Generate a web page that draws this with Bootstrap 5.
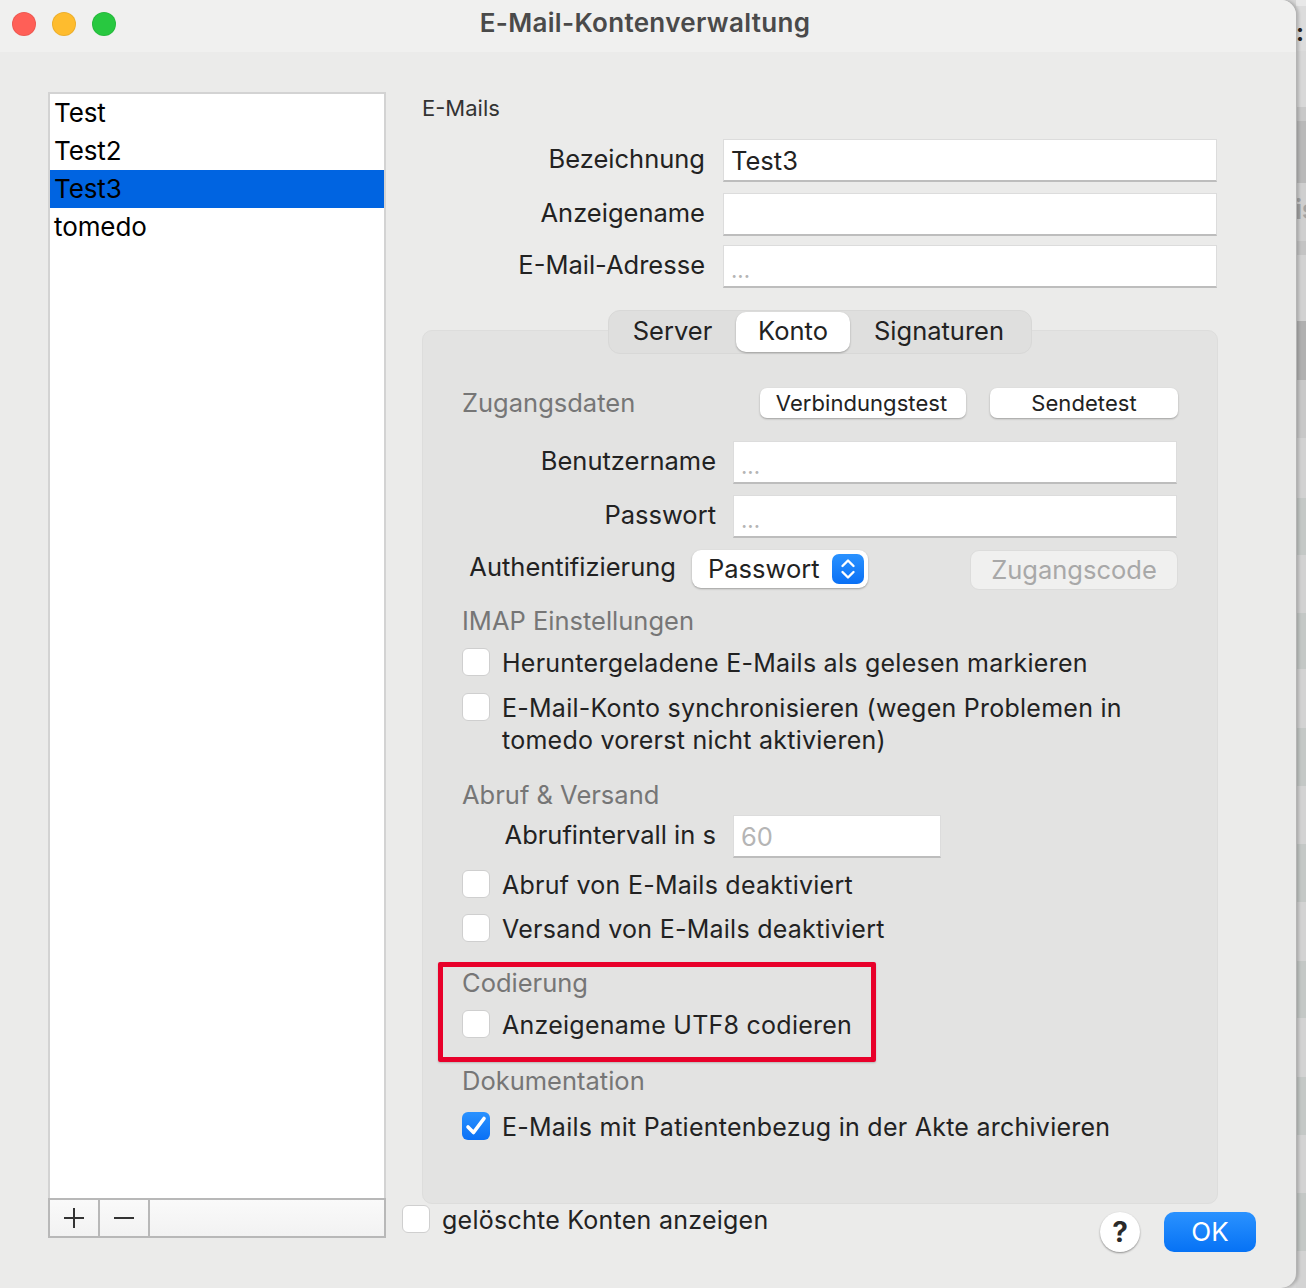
<!DOCTYPE html>
<html lang="de"><head><meta charset="utf-8"><title>E-Mail-Kontenverwaltung</title>
<link href="https://cdn.jsdelivr.net/npm/bootstrap@5.3.0/dist/css/bootstrap.min.css" rel="stylesheet">
<style>
html,body{margin:0;height:1288px;overflow:hidden}
body{background:#d6d6d6;font-family:Inter,"Liberation Sans",sans-serif;color:#222;font-size:25.5px;line-height:32px;letter-spacing:0}
.stage{height:1288px;width:1306px}
.backdrop{position:relative;width:10px;height:1288px;overflow:hidden;background:linear-gradient(#e8e8e8 0 6px,#dcdcdc 6px 51px,#d8d8d8 51px 107px,#c8c8c8 107px 121px,#b9b9b9 121px 183px,#cfcfcf 183px 241px,#c4c4c4 241px 255px,#d2d2d2 255px 321px,#b0b0b0 321px 380px,#c8c8c8 380px 438px,#d2d2d2 438px 498px,#c4c8c6 498px 555px,#d2d2d2 555px 613px,#c4c8c6 613px 669px,#d3d3d3 669px 728px,#c4c8c6 728px 786px,#d3d3d3 786px 844px,#c4c8c6 844px 902px,#d3d3d3 902px 961px,#c4c8c6 961px 1018px,#d3d3d3 1018px 1077px,#c4c8c6 1077px 1135px,#d3d3d3 1135px 1193px,#c4c8c6 1193px 1251px,#d3d3d3 1251px 1288px)}
.bgtxt1{position:absolute;left:0;top:17px;font-weight:700;font-size:24px;color:#222}
.bgtxt2{position:absolute;left:-1px;top:194px;font-weight:700;font-size:26px;color:#a3a3a3}
.winbox{position:relative;z-index:1;width:1296px;height:1288px;background:#ebebea;border-radius:0 15px 15px 0;box-shadow:1px 0 0 #b4b4b4,3px 0 3px rgba(0,0,0,.18);overflow:hidden;flex:none}
.titlebar{height:52px;background:#f0f0ef}
.dots{width:128px;gap:16px;padding:12px 0 0 12px;flex:none}
.dotspacer{width:134px;flex:none}
.dot{width:24px;height:24px;border-radius:50%;border:1px solid rgba(0,0,0,.07)}
.dot-r{background:#ff5f57}.dot-y{background:#febc2e}.dot-g{background:#28c840}
.titletext{font-weight:600;font-size:26px;color:#4a4a4a;line-height:46px;letter-spacing:.33px}
.sidecol{width:338px;height:1146px;margin:40px 0 0 48px;border:2px solid #d3d3d3;border-bottom:0;background:#fff}
.acct{height:38px;line-height:38px;padding-left:4px;color:#000;font-size:26px;letter-spacing:-.1px}
.acct-on{background:#0064e1}
.sidefoot{height:40px;margin:0 -2px;border:2px solid #b8b8b8;background:linear-gradient(#fafafa,#f2f2f2)}
.footbtn{width:50px;border-right:2px solid #b8b8b8;height:100%}
.maincol{width:796px;margin-left:36px;padding-top:40px}
.sect-top{font-size:22px;line-height:32px;color:#333}
.flabel{width:301px;flex:none;text-align:right;padding:0 18px 3px 0}
.finput{height:43px;margin-right:1px;background:#fff;border:1px solid #dcdcdc;border-bottom:2px solid #bdbdbd;padding:0 7px;line-height:42px;overflow:hidden}
.ph{color:#b5b5b5;font-size:22px;line-height:48px}
.m15{margin-top:15px}.m12{margin-top:12px}.m11{margin-top:11px}.m10{margin-top:10px}.m9{margin-top:9px}.m22{margin-top:22px}.m13{margin-top:13px}.m14{margin-top:14px}.m23{margin-top:23px}.m24{margin-top:24px}.m4{margin-top:4px}.m42{margin-top:42px}.m56{margin-top:56px}
.panel{height:874px;background:#e3e3e2;border:1px solid #dddddc;border-radius:10px;position:relative;padding:0 39px 0 39px}
.tabs{position:absolute;left:185px;top:-21px;width:424px;height:44px;background:#dfdfde;border:1px solid #d8d8d7;border-radius:12px;padding:1px 0 0 0}
.tabbtn{height:40px;line-height:38px;text-align:center;color:#222}
.tw1{width:127px}.tw2{width:114px}.tw3{width:178px}
.tabon{background:#fff;border-radius:10px;box-shadow:0 1px 2px rgba(0,0,0,.3)}
.grp{color:#767676;line-height:32px}
.zugtitle{width:298px}
.macbtn{background:#fff;border-radius:7px;box-shadow:0 1px 2px rgba(0,0,0,.3);font-size:22px;line-height:31px;height:30px;text-align:center;color:#222;letter-spacing:.06px}
.bw1{width:206px;padding-right:3px}.bw2{width:188px}
.lbl2{width:271px;flex:none;text-align:right;padding:0 17px 3px 0}
.lbl3{width:230px;flex:none;text-align:right;padding-right:16px;line-height:34px}
.macsel{width:176px;height:38px;background:#fff;border-radius:9px;box-shadow:0 1px 2px rgba(0,0,0,.3);padding:0 4px 0 16px;line-height:38px;flex:none}
.updown{width:32px;height:30px;border-radius:7px;background:linear-gradient(#2a92ff,#0a70f5)}
.zbtn{width:208px;height:40px;background:#f0f0ef;border:1px solid #dcdcdb;border-radius:9px;text-align:center;line-height:37px;color:#a8a8a8}
.intervall{width:208px;color:#b5b5b5;flex:none}
.cbox{width:28px;height:28px;margin-top:1px;flex:none;background:#fff;border:1px solid #cfcfcf;border-radius:6px}
.cbox-on{background:linear-gradient(#2a92ff,#0a70f5);border:0}
.ckrow{gap:12px;font-size:25px;letter-spacing:.25px}
.redbox{position:absolute;left:15px;top:631px;width:438px;height:100px;border:5px solid #e8002a;border-radius:2px;box-shadow:0 1px 2px rgba(0,0,0,.2)}
.bottomrow{margin:0 -38px 0 -20px}
.helpbtn{width:40px;height:40px;margin-top:8px;border-radius:50%;background:#fff;box-shadow:0 1px 2px rgba(0,0,0,.4);font-weight:700;font-size:28px;line-height:40px;text-align:center;color:#2a2a2a}
.okbtn{width:92px;height:40px;margin:8px 0 0 24px;border-radius:10px;background:linear-gradient(#2a92ff,#0672f5);color:#fff;font-size:26px;line-height:40px;text-align:center}
</style></head><body>
<div class="stage d-flex">
 <div class="winbox">
  <div class="titlebar d-flex align-items-start">
   <div class="dots d-flex"><span class="dot dot-r"></span><span class="dot dot-y"></span><span class="dot dot-g"></span></div>
   <div class="titletext flex-grow-1 text-center">E-Mail-Kontenverwaltung</div>
   <div class="dotspacer"></div>
  </div>
  <div class="d-flex">
   <div class="sidecol d-flex flex-column">
    <div class="acct">Test</div><div class="acct">Test2</div><div class="acct acct-on">Test3</div><div class="acct">tomedo</div>
    <div class="flex-grow-1"></div>
    <div class="sidefoot d-flex">
     <div class="footbtn d-flex align-items-center justify-content-center"><svg width="22" height="22" viewBox="0 0 22 22"><path d="M11 1v20M1 11h20" stroke="#333" stroke-width="2"/></svg></div>
     <div class="footbtn d-flex align-items-center justify-content-center"><svg width="22" height="22" viewBox="0 0 22 22"><path d="M1 11h20" stroke="#333" stroke-width="2"/></svg></div>
    </div>
   </div>
   <div class="maincol">
    <div class="sect-top">E-Mails</div>
    <div class="d-flex align-items-center m15"><div class="flabel">Bezeichnung</div><div class="finput flex-grow-1">Test3</div></div>
    <div class="d-flex align-items-center m11"><div class="flabel">Anzeigename</div><div class="finput flex-grow-1"></div></div>
    <div class="d-flex align-items-center m9"><div class="flabel">E-Mail-Adresse</div><div class="finput flex-grow-1 ph">...</div></div>
    <div class="panel m42">
     <div class="tabs d-flex">
      <div class="tabbtn tw1">Server</div><div class="tabbtn tabon tw2">Konto</div><div class="tabbtn tw3">Signaturen</div>
     </div>
     <div class="d-flex align-items-center justify-content-between m56">
      <div class="grp zugtitle">Zugangsdaten</div>
      <div class="macbtn bw1">Verbindungstest</div>
      <div class="macbtn bw2 ms-auto">Sendetest</div>
     </div>
     <div class="d-flex align-items-center m22"><div class="lbl2">Benutzername</div><div class="finput flex-grow-1 ph">...</div></div>
     <div class="d-flex align-items-center m11"><div class="lbl2">Passwort</div><div class="finput flex-grow-1 ph">...</div></div>
     <div class="d-flex align-items-start m12">
      <div class="lbl3">Authentifizierung</div>
      <div class="macsel d-flex align-items-center justify-content-between">
       <span>Passwort</span>
       <span class="updown d-flex align-items-center justify-content-center"><svg width="18" height="24" viewBox="0 0 18 24"><path d="M3.5 9 9 3.5 14.5 9M3.5 15 9 20.5 14.5 15" fill="none" stroke="#fff" stroke-width="2.4" stroke-linecap="round" stroke-linejoin="round"/></svg></span>
      </div>
      <div class="zbtn ms-auto">Zugangscode</div>
     </div>
     <div class="grp m15">IMAP Einstellungen</div>
     <div class="d-flex ckrow m10"><span class="cbox"></span><span>Heruntergeladene E-Mails als gelesen markieren</span></div>
     <div class="d-flex ckrow m13"><span class="cbox"></span><span>E-Mail-Konto synchronisieren (wegen Problemen in<br>tomedo vorerst nicht aktivieren)</span></div>
     <div class="grp m23">Abruf &amp; Versand</div>
     <div class="d-flex align-items-center m4"><div class="lbl2">Abrufintervall in s</div><div class="finput intervall">60</div></div>
     <div class="d-flex ckrow m11"><span class="cbox"></span><span>Abruf von E-Mails deaktiviert</span></div>
     <div class="d-flex ckrow m12"><span class="cbox"></span><span>Versand von E-Mails deaktiviert</span></div>
     <div class="grp m22">Codierung</div>
     <div class="d-flex ckrow m10"><span class="cbox"></span><span>Anzeigename UTF8 codieren</span></div>
     <div class="grp m24">Dokumentation</div>
     <div class="d-flex ckrow m14"><span class="cbox cbox-on d-flex align-items-center justify-content-center"><svg width="22" height="22" viewBox="0 0 22 22"><path d="M3 12 8.5 17.5 19 3.5" fill="none" stroke="#fff" stroke-width="3.6" stroke-linecap="round" stroke-linejoin="round"/></svg></span><span>E-Mails mit Patientenbezug in der Akte archivieren</span></div>
     <div class="redbox"></div>
    </div>
    <div class="d-flex align-items-start bottomrow">
     <div class="d-flex ckrow"><span class="cbox"></span><span>gelöschte Konten anzeigen</span></div>
     <div class="helpbtn ms-auto">?</div>
     <div class="okbtn">OK</div>
    </div>
   </div>
  </div>
 </div>
 <div class="backdrop"><span class="bgtxt1">:</span><span class="bgtxt2">is</span></div>
</div>
</body></html>
